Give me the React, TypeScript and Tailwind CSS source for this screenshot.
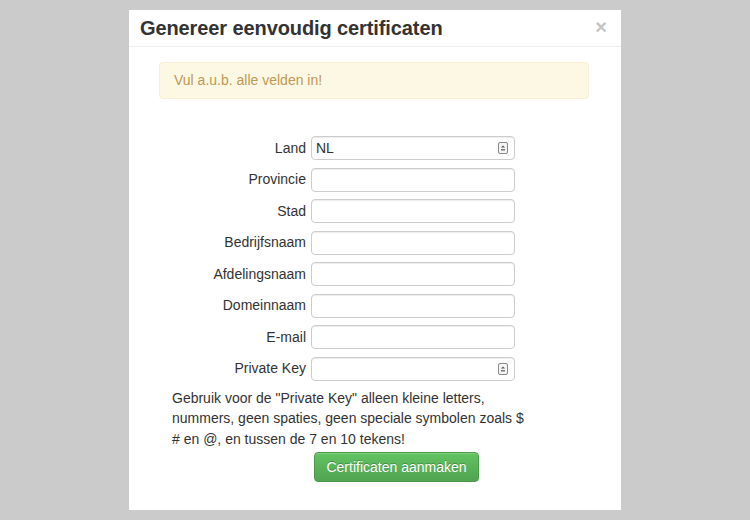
import React from "react";

const SelectIcon = () => (
  <svg width="10" height="12" viewBox="0 0 10 12" className="absolute right-[6px] top-1/2 -translate-y-1/2">
    <rect x="0.5" y="0.5" width="9" height="11" rx="1.5" fill="#f4f4f4" stroke="#8a8a8a" />
    <path d="M3 5.5 L5 3.5 L7 5.5 Z" fill="#555" />
    <rect x="3" y="7" width="4" height="1.5" fill="#777" />
  </svg>
);

const fields: { label: string; value?: string; select?: boolean }[] = [
  { label: "Land", value: "NL", select: true },
  { label: "Provincie" },
  { label: "Stad" },
  { label: "Bedrijfsnaam" },
  { label: "Afdelingsnaam" },
  { label: "Domeinnaam" },
  { label: "E-mail" },
  { label: "Private Key", select: true },
];

export default function App() {
  return (
    <div
      className="w-[750px] h-[520px] bg-[#cbcbcb] overflow-hidden pt-[10px] pl-[129px]"
      style={{ fontFamily: '"Liberation Sans", Arial, sans-serif' }}
    >
      <div className="w-[492px] h-[500px] bg-white flex flex-col">
        <div className="h-[37px] border-b border-[#eeeeee] flex items-center justify-between pl-[11px] pr-[14px]">
          <h1 className="text-[20px] font-bold text-[#333] leading-none tracking-[-0.1px]">
            Genereer eenvoudig certificaten
          </h1>
          <span className="text-[#c4c4c4] text-[20px] font-bold leading-none -mt-[2px]">×</span>
        </div>
        <div className="pt-[15px]">
          <div className="mx-[30px] w-[430px] h-[37px] rounded-[4px] bg-[#fcf8e3] border border-[#fbeed5] flex items-center pl-[14px] text-[14px] text-[#c09853]">
            Vul a.u.b. alle velden in!
          </div>
          <div className="mt-[37px] flex flex-col gap-[7.5px]">
            {fields.map((f) => (
              <div key={f.label} className="flex items-center">
                <label className="w-[177px] text-right text-[14px] text-[#333] pr-0">{f.label}</label>
                <div className="ml-[5px] relative w-[204px] h-[24px] rounded-[4px] border border-[#cccccc] shadow-[inset_0_1px_1px_rgba(0,0,0,0.075)] bg-white flex items-center pl-[4px] text-[14px] text-[#333]">
                  {f.value}
                  {f.select && <SelectIcon />}
                </div>
              </div>
            ))}
          </div>
          <p className="mt-[7px] ml-[43px] w-[360px] text-[14px] leading-[20.5px] text-[#333]">
            Gebruik voor de "Private Key" alleen kleine letters, nummers, geen spaties, geen speciale symbolen zoals $ # en @, en tussen de 7 en 10 tekens!
          </p>
          <div className="mt-[3px] ml-[185px]">
            <button className="w-[165px] h-[30px] rounded-[4px] border border-[#4a9a4a] bg-gradient-to-b from-[#62c462] to-[#51a351] text-white text-[14px] shadow-[inset_0_1px_0_rgba(255,255,255,0.2)] [text-shadow:0_-1px_0_rgba(0,0,0,0.25)]">
              Certificaten aanmaken
            </button>
          </div>
        </div>
      </div>
    </div>
  );
}
